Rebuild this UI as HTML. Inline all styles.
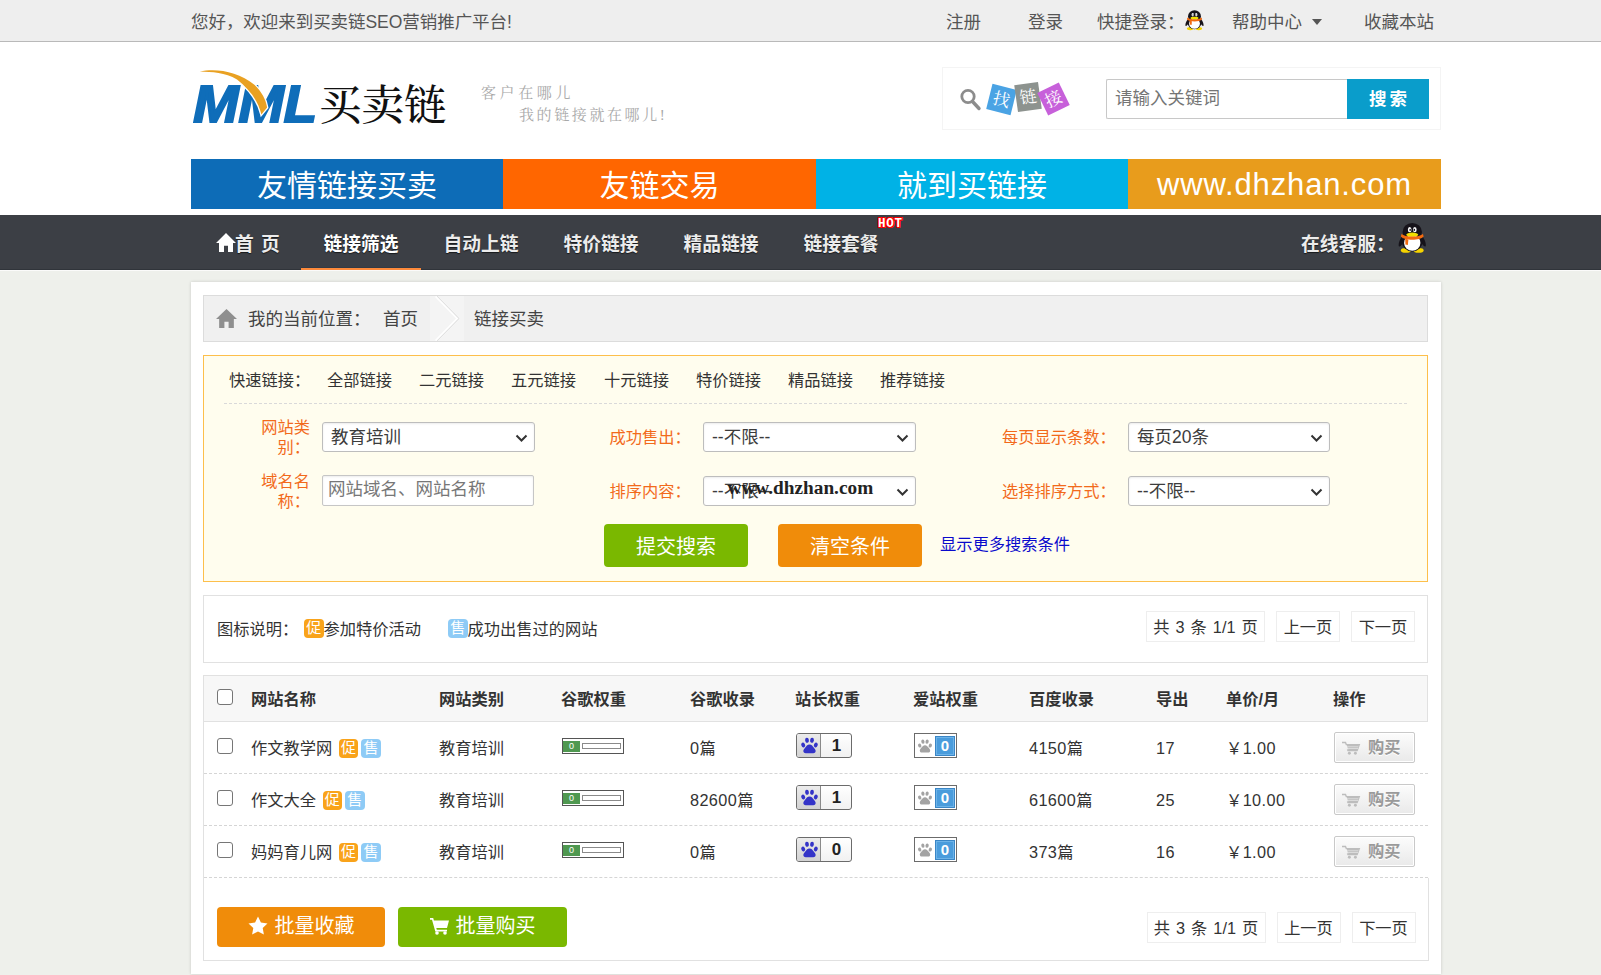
<!DOCTYPE html>
<html lang="zh-CN">
<head>
<meta charset="utf-8">
<title>链接买卖 - 买卖链SEO营销推广平台</title>
<style>
*{box-sizing:border-box;margin:0;padding:0}
html,body{width:1601px;height:975px;overflow:hidden}
body{background:#eef0eb;font-family:"Liberation Sans","Noto Sans CJK SC",sans-serif;color:#333;font-size:16.25px;position:relative}
a{color:inherit;text-decoration:none}
ul{list-style:none}
.abs{position:absolute}

/* top bar */
#topbar{position:absolute;left:0;top:0;width:1601px;height:42px;background:#eee;border-bottom:1px solid #b9b9b9;font-size:17.5px;color:#555;line-height:44px}
#topbar span,#topbar a{position:absolute;top:0;white-space:nowrap}
#topbar .caret{left:1312px;top:18.5px;width:0;height:0;border-left:5.5px solid transparent;border-right:5.5px solid transparent;border-top:6px solid #555}

/* header */
#header{position:absolute;left:0;top:42px;width:1601px;height:173px;background:#fff}
#logo{position:absolute;left:191px;top:24px}
.slogan{position:absolute;font-family:"Liberation Serif","Noto Serif CJK SC",serif;font-size:15px;color:#a9a9a9;white-space:nowrap;line-height:20px}
#sbox{position:absolute;left:942px;top:25px;width:499px;height:63px;border:1px solid #f4f4f4}
#sbox input{position:absolute;left:163px;top:11px;width:242px;height:40px;border:1px solid #c8c8c8;border-right:0;border-radius:2px 0 0 2px;padding:0 8px 2px 8px;font-size:17.5px;font-family:inherit;color:#333;outline:0;background:#fff}
#sbox input::placeholder{color:#757575;opacity:1}
#sbox button{position:absolute;left:404px;top:11px;width:82px;height:40px;border:0;background:#0a9dcb;color:#fff;font-weight:bold;font-size:17.5px;font-family:inherit;letter-spacing:0;padding:0 0 4px 0;word-spacing:-2px}
#banner{position:absolute;left:191px;top:117px;width:1250px;height:50px;display:flex;color:#fff;font-size:30px;line-height:54px;text-align:center}
#banner div{height:50px;white-space:nowrap;overflow:hidden}

/* nav */
#nav{position:absolute;left:0;top:215px;width:1601px;height:55px;background:#3c3f45;box-shadow:inset 0 -1px 0 #30343a,0 1px 0 #fbfbfa;color:#ececec;font-weight:bold;font-size:18.75px;line-height:59px;text-shadow:0 1px 1px rgba(0,0,0,.6)}
#nav a{position:absolute;top:0;height:55px;overflow:hidden;white-space:nowrap;text-align:center}
#nav a.on{border-bottom:2px solid #fd8a3b;color:#fff;box-shadow:inset 0 -1px 0 #333a44}
#nav .hot{position:absolute;left:878px;top:3px;font-size:12.5px;line-height:13px;font-family:"Liberation Mono",monospace;font-weight:bold;color:#fff;letter-spacing:0.7px;text-shadow:1px 0 0 #f00,-1px 0 0 #f00,0 1px 0 #f00,0 -1px 0 #f00,1px 1px 0 #f00,-1px -1px 0 #f00,1px -1px 0 #f00,-1px 1px 0 #f00}

/* main container */
#main{position:absolute;left:191px;top:282px;width:1250px;height:692px;background:#fff;box-shadow:0 0 3px rgba(0,0,0,.16)}
#crumb{position:absolute;left:12px;top:13px;width:1225px;height:47px;background:#f0f0f0;border:1px solid #dcdcdc;font-size:17.5px;color:#444;line-height:46px}
#crumb span{position:absolute;top:0;white-space:nowrap}

#filter{position:absolute;left:12px;top:73px;width:1225px;height:227px;background:#fffdee;border:1px solid #fdbf4b}
#quick{position:absolute;left:20px;top:0;width:1183px;height:48px;border-bottom:1px dashed #d9d9d9;font-size:16.25px;line-height:49px;color:#333}
#quick a,#quick span{position:absolute;top:0;white-space:nowrap}
.flabel{position:absolute;color:#f26a1b;font-size:16.25px;line-height:20px;text-align:right}
.sel{position:absolute;height:30px;border:1px solid #bdbdbd;border-radius:3px;background:#fff;box-shadow:inset 0 1px 2px rgba(0,0,0,.08)}
.sel select{appearance:none;-webkit-appearance:none;border:0;background:transparent;width:100%;height:100%;font-size:17.5px;font-family:inherit;color:#3c3c3c;padding:0 26px 0 8px;outline:0;line-height:28px}
.sel svg{position:absolute;right:6px;top:11px;pointer-events:none}
.tin{position:absolute;height:31px;border:1px solid #c6c6c6;border-radius:2px;background:#fff;font-size:17.5px;font-family:inherit;color:#333;padding:0 5px 2px 5px;outline:0;box-shadow:inset 0 1px 2px rgba(0,0,0,.08)}
.tin::placeholder{color:#777;opacity:1}
.btn{position:absolute;border:0;border-radius:4px;color:#fff;font-family:inherit;font-size:20px;text-align:center;white-space:nowrap}
.green{background:#7ab800}
.orange{background:#f08c0a}
.wm{position:absolute;font-family:"Liberation Serif",serif;font-weight:bold;font-size:19px;color:#222;white-space:nowrap;pointer-events:none}

#legend{position:absolute;left:12px;top:313px;width:1225px;height:68px;border:1px solid #e1e1e1;background:#fff;font-size:16.25px;line-height:66px}
#legend>span{position:absolute;top:0;white-space:nowrap}
.bd{display:inline-block;width:19.5px;height:18.5px;border-radius:4px;color:#fff;font-size:15px;line-height:17px;text-align:center;vertical-align:middle;position:relative;overflow:hidden}
.bd.c{background:#f9a31a}
.bd.s{background:#8ecbf6}
.pg{position:absolute;height:31px;border:1px solid #eee;background:#fff;font-size:16.25px;line-height:30px;text-align:center;color:#333;white-space:nowrap}

#tbl{position:absolute;left:12px;top:393px;width:1225px;height:286px;border-left:1px solid #e1e1e1}
#thead{position:absolute;left:-1px;top:0;width:1225px;height:47px;background:#f7f7f7;border:1px solid #e1e1e1;font-weight:bold;font-size:16.25px;line-height:47px;color:#333}
#thead span{position:absolute;top:0;white-space:nowrap}
.row{position:absolute;left:0;width:1224px;height:52px;border-bottom:1px dashed #d5d5d5;font-size:16.25px;line-height:52px;color:#333}
.row>span{position:absolute;top:0;white-space:nowrap}
.cb{position:absolute;width:16px;height:16px;border:1px solid #767676;border-radius:3px;background:#fff;appearance:none;-webkit-appearance:none;margin:0}
.pr{position:absolute;left:358px;top:16px;width:62px;height:16px;border:1px solid #555;background:#fff}
.pr i{position:absolute;left:0;top:1.5px;width:17px;height:11px;background:#4f9850;color:#fff;font-size:9px;line-height:11px;text-align:center;font-style:normal;font-weight:normal;font-family:"Liberation Sans",sans-serif}
.pr b{position:absolute;left:19px;top:4px;width:39px;height:6px;border:1px solid #8a8a8a;background:#fff}
.br{position:absolute;left:592px;top:11px;width:56px;height:25px;border:1px solid #6b6b6b;border-radius:3px;background:linear-gradient(#fff,#f1f1f1);overflow:hidden}
.br i{position:absolute;left:0;top:0;width:24px;height:23px;background:linear-gradient(#ececec,#d2d2d2);border-right:1px solid #8a8a8a}
.br b{position:absolute;left:25px;top:0;width:29px;height:23px;font-size:17px;line-height:23px;text-align:center;color:#222;font-weight:bold}
.br svg,.az svg{position:absolute}
.az{position:absolute;left:710px;top:11px;width:43px;height:25px;border:1px solid #6b6b6b;background:#fff}
.az b{position:absolute;left:20px;top:1.5px;width:20px;height:20px;background:#4a9cdc;border:1px solid #3a86c6;box-shadow:inset 0 0 0 1px #6db3e8;color:#fff;font-size:15px;line-height:18px;text-align:center;font-weight:bold;font-family:"Liberation Sans",sans-serif}
.buy{position:absolute;left:1130px;top:10px;width:81px;height:31px;border:1px solid #c9c9c9;border-radius:2px;background:linear-gradient(#fcfcfc,#e9e9e9);color:#9a9a9a;font-weight:bold;font-size:16.25px;line-height:28px;text-shadow:0 1px 0 #fff;box-shadow:inset 0 0 0 1px #fff}
.buy em{position:absolute;left:33px;top:0;font-style:normal;white-space:nowrap}
.buy svg{position:absolute;left:7px;top:7.5px}
#foot{position:absolute;left:-1px;top:203px;width:1226px;height:83px;border:1px solid #e1e1e1;border-top:0}
</style>
</head>
<body>

<div id="topbar">
  <span style="left:191px;letter-spacing:-0.05px">您好，欢迎来到买卖链SEO营销推广平台!</span>
  <a style="left:946px">注册</a>
  <a style="left:1028px">登录</a>
  <span style="left:1097px">快捷登录：</span>
  <svg class="abs" style="left:1184.500px;top:10px" width="19" height="20.500" viewBox="0 0 30 32"><g><path d="M4.500 14C1.500 18 .3 22 .8 24.500c.5 1.600 2.200.2 4.200-2.500zM25.500 14c3 4 4.200 8 3.700 10.500-.5 1.600-2.200.2-4.200-2.500z" fill="#16131a"/><ellipse cx="8.300" cy="29.200" rx="5.300" ry="2.500" fill="#f6d400"/><ellipse cx="21.700" cy="29.200" rx="5.300" ry="2.500" fill="#f6d400"/><ellipse cx="15" cy="19.500" rx="11" ry="10.800" fill="#16131a"/><ellipse cx="15" cy="9.800" rx="10.200" ry="9.600" fill="#16131a"/><ellipse cx="15" cy="21.300" rx="8.600" ry="8.300" fill="#fff"/><ellipse cx="12.300" cy="7.300" rx="1.900" ry="2.700" fill="#fff"/><ellipse cx="17.700" cy="7.300" rx="1.900" ry="2.700" fill="#fff"/><ellipse cx="12.800" cy="7.600" rx=".8" ry="1.200" fill="#16131a"/><ellipse cx="17.200" cy="7.600" rx=".8" ry="1.200" fill="#16131a"/><ellipse cx="15" cy="12.600" rx="6.300" ry="2.300" fill="#f3e000"/><path d="M3.800 11.600c3.500 4 19 4 22.400 0l.8 3c-4 4.600-20 4.600-24 0z" fill="#f26a10"/><path d="M7.600 16.800l3.300.9-.5 5.800-2.600-.6z" fill="#f26a10"/></g></svg>
  <a style="left:1232px">帮助中心</a>
  <i class="abs caret"></i>
  <a style="left:1364px">收藏本站</a>
</div>

<div id="header">
  <svg id="logo" width="260" height="64" viewBox="0 0 260 64">
    <text transform="scale(1.067 1)" x="2" y="56.2" font-family="Liberation Sans, sans-serif" font-weight="bold" font-style="italic" font-size="51" fill="#0f6db9" stroke="#0f6db9" stroke-width="2" stroke-linejoin="miter">MML</text>
    <path d="M8.800 5.600C24 2 47 5 63.400 18.700C71 26 75 34 76.100 41.500L70.400 48.400C67 34 58 23 46 13.500C34 6.500 21 6 8.800 5.600Z" fill="#e9a122" stroke="#fff" stroke-width="2.600" paint-order="stroke"/>
    <text x="128" y="53.500" font-family="Liberation Serif, Noto Serif CJK SC, serif" font-size="42.500" fill="#111" font-weight="500">买卖链</text>
  </svg>
  <div class="slogan" style="left:481px;top:41px;letter-spacing:3.6px">客户在哪儿</div>
  <div class="slogan" style="left:519px;top:62.5px;letter-spacing:2.6px">我的链接就在哪儿!</div>
  <div id="sbox">
    <svg class="abs" style="left:14px;top:17.500px" width="26" height="28" viewBox="0 0 26 28"><circle cx="11" cy="10.500" r="6.200" fill="none" stroke="#8c8c8c" stroke-width="2.800"/><path d="M15.500 15.500L22 22.500" stroke="#8c8c8c" stroke-width="3.400" stroke-linecap="round"/></svg>
    <svg class="abs" style="left:38px;top:10px" width="100" height="48" viewBox="0 0 100 48" font-family="Liberation Serif, Noto Serif CJK SC, serif" font-size="17" fill="#fff" text-anchor="middle">
      <g transform="translate(20.500 21.500) rotate(14)"><rect x="-12.500" y="-13" width="25" height="26" fill="#4aa3e4"/><text x="0" y="6">找</text></g>
      <g transform="translate(47 19) rotate(-8)"><rect x="-12" y="-13.500" width="24" height="27" fill="#8d938f"/><text x="0" y="6">链</text></g>
      <g transform="translate(72.500 21) rotate(-26)"><rect x="-12" y="-12.500" width="24" height="25" fill="#c760da"/><text x="0" y="6">接</text></g>
    </svg>
    <input type="text" placeholder="请输入关键词">
    <button>搜 索</button>
  </div>
  <div id="banner">
    <div style="width:312px;background:#0d6cb7">友情链接买卖</div>
    <div style="width:313px;background:#ff6600">友链交易</div>
    <div style="width:312px;background:#00b2e6">就到买链接</div>
    <div style="width:313px;background:#e89c1c;font-size:31px;letter-spacing:0.85px;line-height:51px">www.dhzhan.com</div>
  </div>
</div>

<div id="nav">
  <a style="left:191px;width:110px"><svg class="abs" style="left:25px;top:18px" width="20" height="19" viewBox="0 0 20 18" preserveAspectRatio="none"><path d="M10 0L0 9.500h3V18h5v-6h4v6h5V9.500h3z" fill="#fff"/></svg><span class="abs" style="left:44px;top:0;word-spacing:2px">首 页</span></a>
  <a class="on" style="left:301px;width:120px">链接筛选</a>
  <a style="left:421px;width:120px">自动上链</a>
  <a style="left:541px;width:120px">特价链接</a>
  <a style="left:661px;width:120px">精品链接</a>
  <a style="left:781px;width:120px">链接套餐</a>
  <span class="hot">HOT</span>
  <span class="abs" style="left:1301px;top:0;white-space:nowrap">在线客服：</span>
  <svg class="abs" style="left:1397.500px;top:7px" width="28.500" height="32" viewBox="0 0 30 32.200"><g><path d="M4.500 14C1.500 18 .3 22 .8 24.500c.5 1.600 2.200.2 4.200-2.500zM25.500 14c3 4 4.200 8 3.700 10.500-.5 1.600-2.200.2-4.200-2.500z" fill="#16131a"/><ellipse cx="8.300" cy="29.200" rx="5.300" ry="2.500" fill="#f6d400"/><ellipse cx="21.700" cy="29.200" rx="5.300" ry="2.500" fill="#f6d400"/><ellipse cx="15" cy="19.500" rx="11" ry="10.800" fill="#16131a"/><ellipse cx="15" cy="9.800" rx="10.200" ry="9.600" fill="#16131a"/><ellipse cx="15" cy="21.300" rx="8.600" ry="8.300" fill="#fff"/><ellipse cx="12.300" cy="7.300" rx="1.900" ry="2.700" fill="#fff"/><ellipse cx="17.700" cy="7.300" rx="1.900" ry="2.700" fill="#fff"/><ellipse cx="12.800" cy="7.600" rx=".8" ry="1.200" fill="#16131a"/><ellipse cx="17.200" cy="7.600" rx=".8" ry="1.200" fill="#16131a"/><ellipse cx="15" cy="12.600" rx="6.300" ry="2.300" fill="#f3e000"/><path d="M3.800 11.600c3.500 4 19 4 22.400 0l.8 3c-4 4.600-20 4.600-24 0z" fill="#f26a10"/><path d="M7.600 16.800l3.300.9-.5 5.800-2.600-.6z" fill="#f26a10"/></g></svg>
</div>

<div id="main">
  <div id="crumb">
    <svg class="abs" style="left:12px;top:13px" width="21" height="19" viewBox="0 0 20 18"><path d="M10 0L0 9.500h3V18h5v-6h4v6h5V9.500h3z" fill="#8f8f8f"/></svg>
    <span style="left:44px">我的当前位置：</span>
    <span style="left:179px">首页</span>
    <svg class="abs" style="left:226px;top:0" width="34" height="45" viewBox="0 0 34 44" preserveAspectRatio="none"><rect x="0" y="0" width="34" height="44" fill="#f4f4f4"/><path d="M6 0L28 22L6 44" fill="none" stroke="#fff" stroke-width="3"/><path d="M7 0L29 22L7 44" fill="none" stroke="#dedede" stroke-width="1"/></svg>
    <span style="left:270px">链接买卖</span>
  </div>

  <div id="filter">
    <div id="quick">
      <span style="left:5px">快速链接：</span>
      <a style="left:103px">全部链接</a>
      <a style="left:195px">二元链接</a>
      <a style="left:287px">五元链接</a>
      <a style="left:380px">十元链接</a>
      <a style="left:472px">特价链接</a>
      <a style="left:564px">精品链接</a>
      <a style="left:656px">推荐链接</a>
    </div>
    <div class="flabel" style="left:49px;top:61px;width:57px">网站类别：</div>
    <div class="sel" style="left:118px;top:66px;width:213px"><select><option>教育培训</option></select><svg width="13" height="8" viewBox="0 0 13 8"><path d="M1.500 1.500L6.500 6.500L11.500 1.500" fill="none" stroke="#333" stroke-width="2"/></svg></div>
    <div class="flabel" style="left:49px;top:115px;width:57px">域名名称：</div>
    <input class="tin" style="left:118px;top:119px;width:212px" placeholder="网站域名、网站名称">

    <div class="flabel" style="left:379px;top:71px;width:107.75px">成功售出：</div>
    <div class="sel" style="left:499px;top:66px;width:213px"><select><option>--不限--</option></select><svg width="13" height="8" viewBox="0 0 13 8"><path d="M1.500 1.500L6.500 6.500L11.500 1.500" fill="none" stroke="#333" stroke-width="2"/></svg></div>
    <div class="flabel" style="left:379px;top:125px;width:107.75px">排序内容：</div>
    <div class="sel" style="left:499px;top:120px;width:213px"><select><option>--不限--</option></select><svg width="13" height="8" viewBox="0 0 13 8"><path d="M1.500 1.500L6.500 6.500L11.500 1.500" fill="none" stroke="#333" stroke-width="2"/></svg></div>
    <div class="wm" style="left:523.5px;top:121px;font-size:19.3px">www.dhzhan.com</div>

    <div class="flabel" style="left:779px;top:71px;width:132.75px">每页显示条数：</div>
    <div class="sel" style="left:924px;top:66px;width:202px"><select><option>每页20条</option></select><svg width="13" height="8" viewBox="0 0 13 8"><path d="M1.500 1.500L6.500 6.500L11.500 1.500" fill="none" stroke="#333" stroke-width="2"/></svg></div>
    <div class="flabel" style="left:779px;top:125px;width:132.75px">选择排序方式：</div>
    <div class="sel" style="left:924px;top:120px;width:202px"><select><option>--不限--</option></select><svg width="13" height="8" viewBox="0 0 13 8"><path d="M1.500 1.500L6.500 6.500L11.500 1.500" fill="none" stroke="#333" stroke-width="2"/></svg></div>

    <button class="btn green" style="left:400px;top:168px;width:144px;height:43px">提交搜索</button>
    <button class="btn orange" style="left:574px;top:168px;width:144px;height:43px">清空条件</button>
    <a class="abs" style="left:736px;top:178px;color:#0a0acc;font-size:16.25px;line-height:20px;white-space:nowrap">显示更多搜索条件</a>
  </div>

  <div id="legend">
    <span style="left:13px">图标说明：</span>
    <span style="left:100px"><i class="bd c" style="font-style:normal;top:-2px">促</i>参加特价活动</span>
    <span style="left:244px"><i class="bd s" style="font-style:normal;top:-2px">售</i>成功出售过的网站</span>
    <div class="pg" style="left:942px;top:15px;width:119px;word-spacing:1.5px">共 3 条 1/1 页</div>
    <div class="pg" style="left:1072px;top:15px;width:64px">上一页</div>
    <div class="pg" style="left:1147px;top:15px;width:64px">下一页</div>
  </div>

  <div id="tbl">
    <div id="thead">
      <input type="checkbox" class="cb" style="left:13px;top:13px">
      <span style="left:47px">网站名称</span>
      <span style="left:235px">网站类别</span>
      <span style="left:357px">谷歌权重</span>
      <span style="left:486px">谷歌收录</span>
      <span style="left:591px">站长权重</span>
      <span style="left:709px">爱站权重</span>
      <span style="left:825px">百度收录</span>
      <span style="left:952px">导出</span>
      <span style="left:1022px">单价/月</span>
      <span style="left:1129px">操作</span>
    </div>
    <div class="row" style="top:47px">
      <input type="checkbox" class="cb" style="left:13px;top:16px">
      <span style="left:47px">作文教学网 <i class="bd c" style="font-style:normal;top:-1px;margin-left:2px">促</i><i class="bd s" style="font-style:normal;top:-1px;margin-left:3px">售</i></span>
      <span style="left:235px">教育培训</span>
      <div class="pr"><i>0</i><b></b></div>
      <span style="left:486px;letter-spacing:.4px">0篇</span>
      <div class="br"><i></i><svg style="left:3px;top:2px" width="19" height="19" viewBox="0 0 19 19" fill="#3434c8"><ellipse cx="3.2" cy="9" rx="1.900" ry="2.400" transform="rotate(-25 3.200 9)"/><ellipse cx="7" cy="4.300" rx="1.900" ry="2.600" transform="rotate(-8 7 4.300)"/><ellipse cx="12" cy="4.300" rx="1.900" ry="2.600" transform="rotate(8 12 4.300)"/><ellipse cx="15.800" cy="9" rx="1.900" ry="2.400" transform="rotate(25 15.800 9)"/><path d="M9.500 8.500c2.200 0 3.200 1.800 4.600 3.400 1.500 1.700 2 3 1.200 4.300-.9 1.400-2.700 1-5.800 1s-4.900.4-5.800-1c-.8-1.300-.3-2.600 1.200-4.300 1.400-1.600 2.400-3.400 4.600-3.400z"/></svg><b>1</b></div>
      <div class="az"><svg style="left:2px;top:4px" width="16" height="16" viewBox="0 0 19 19" fill="#a3a3a3"><ellipse cx="3.200" cy="9" rx="1.900" ry="2.400" transform="rotate(-25 3.200 9)"/><ellipse cx="7" cy="4.300" rx="1.900" ry="2.600" transform="rotate(-8 7 4.300)"/><ellipse cx="12" cy="4.300" rx="1.900" ry="2.600" transform="rotate(8 12 4.300)"/><ellipse cx="15.800" cy="9" rx="1.900" ry="2.400" transform="rotate(25 15.800 9)"/><path d="M9.500 8.500c2.200 0 3.200 1.800 4.600 3.400 1.500 1.700 2 3 1.200 4.300-.9 1.400-2.700 1-5.800 1s-4.900.4-5.800-1c-.8-1.300-.3-2.600 1.200-4.300 1.400-1.600 2.400-3.400 4.600-3.400z"/></svg><b>0</b></div>
      <span style="left:825px;letter-spacing:.4px">4150篇</span>
      <span style="left:952px;letter-spacing:.4px">17</span>
      <span style="left:1022px;letter-spacing:.4px">￥1.00</span>
      <a class="buy"><svg width="19" height="15" viewBox="0 0 22 17"><path d="M0 1.500h4l1 2.500H20l-2.500 7H7l-.7-1.500" fill="none" stroke="#bdbdbd" stroke-width="1.600"/><path d="M5.500 4.500H19.500L17.300 10.200H7.300z" fill="#bdbdbd"/><path d="M6 6.500h13M6.500 8.500h12" stroke="#e9e9e9" stroke-width=".8"/><circle cx="8.500" cy="14" r="1.700" fill="#bdbdbd"/><circle cx="15.500" cy="14" r="1.700" fill="#bdbdbd"/></svg><em>购买</em></a>
    </div>
    <div class="row" style="top:99px">
      <input type="checkbox" class="cb" style="left:13px;top:16px">
      <span style="left:47px">作文大全 <i class="bd c" style="font-style:normal;top:-1px;margin-left:2px">促</i><i class="bd s" style="font-style:normal;top:-1px;margin-left:3px">售</i></span>
      <span style="left:235px">教育培训</span>
      <div class="pr"><i>0</i><b></b></div>
      <span style="left:486px;letter-spacing:.4px">82600篇</span>
      <div class="br"><i></i><svg style="left:3px;top:2px" width="19" height="19" viewBox="0 0 19 19" fill="#3434c8"><ellipse cx="3.2" cy="9" rx="1.900" ry="2.400" transform="rotate(-25 3.200 9)"/><ellipse cx="7" cy="4.300" rx="1.900" ry="2.600" transform="rotate(-8 7 4.300)"/><ellipse cx="12" cy="4.300" rx="1.900" ry="2.600" transform="rotate(8 12 4.300)"/><ellipse cx="15.800" cy="9" rx="1.900" ry="2.400" transform="rotate(25 15.800 9)"/><path d="M9.500 8.500c2.200 0 3.200 1.800 4.600 3.400 1.500 1.700 2 3 1.200 4.300-.9 1.400-2.700 1-5.800 1s-4.900.4-5.800-1c-.8-1.300-.3-2.600 1.200-4.300 1.400-1.600 2.400-3.400 4.600-3.400z"/></svg><b>1</b></div>
      <div class="az"><svg style="left:2px;top:4px" width="16" height="16" viewBox="0 0 19 19" fill="#a3a3a3"><ellipse cx="3.200" cy="9" rx="1.900" ry="2.400" transform="rotate(-25 3.200 9)"/><ellipse cx="7" cy="4.300" rx="1.900" ry="2.600" transform="rotate(-8 7 4.300)"/><ellipse cx="12" cy="4.300" rx="1.900" ry="2.600" transform="rotate(8 12 4.300)"/><ellipse cx="15.800" cy="9" rx="1.900" ry="2.400" transform="rotate(25 15.800 9)"/><path d="M9.500 8.500c2.200 0 3.200 1.800 4.600 3.400 1.500 1.700 2 3 1.200 4.300-.9 1.400-2.700 1-5.800 1s-4.900.4-5.800-1c-.8-1.300-.3-2.600 1.200-4.300 1.400-1.600 2.400-3.400 4.600-3.400z"/></svg><b>0</b></div>
      <span style="left:825px;letter-spacing:.4px">61600篇</span>
      <span style="left:952px;letter-spacing:.4px">25</span>
      <span style="left:1022px;letter-spacing:.4px">￥10.00</span>
      <a class="buy"><svg width="19" height="15" viewBox="0 0 22 17"><path d="M0 1.500h4l1 2.500H20l-2.500 7H7l-.7-1.500" fill="none" stroke="#bdbdbd" stroke-width="1.600"/><path d="M5.500 4.500H19.500L17.300 10.200H7.300z" fill="#bdbdbd"/><path d="M6 6.500h13M6.500 8.500h12" stroke="#e9e9e9" stroke-width=".8"/><circle cx="8.500" cy="14" r="1.700" fill="#bdbdbd"/><circle cx="15.500" cy="14" r="1.700" fill="#bdbdbd"/></svg><em>购买</em></a>
    </div>
    <div class="row" style="top:151px">
      <input type="checkbox" class="cb" style="left:13px;top:16px">
      <span style="left:47px">妈妈育儿网 <i class="bd c" style="font-style:normal;top:-1px;margin-left:2px">促</i><i class="bd s" style="font-style:normal;top:-1px;margin-left:3px">售</i></span>
      <span style="left:235px">教育培训</span>
      <div class="pr"><i>0</i><b></b></div>
      <span style="left:486px;letter-spacing:.4px">0篇</span>
      <div class="br"><i></i><svg style="left:3px;top:2px" width="19" height="19" viewBox="0 0 19 19" fill="#3434c8"><ellipse cx="3.2" cy="9" rx="1.900" ry="2.400" transform="rotate(-25 3.200 9)"/><ellipse cx="7" cy="4.300" rx="1.900" ry="2.600" transform="rotate(-8 7 4.300)"/><ellipse cx="12" cy="4.300" rx="1.900" ry="2.600" transform="rotate(8 12 4.300)"/><ellipse cx="15.800" cy="9" rx="1.900" ry="2.400" transform="rotate(25 15.800 9)"/><path d="M9.500 8.500c2.200 0 3.200 1.800 4.600 3.400 1.500 1.700 2 3 1.200 4.300-.9 1.400-2.700 1-5.800 1s-4.900.4-5.800-1c-.8-1.300-.3-2.600 1.200-4.300 1.400-1.600 2.400-3.400 4.600-3.400z"/></svg><b>0</b></div>
      <div class="az"><svg style="left:2px;top:4px" width="16" height="16" viewBox="0 0 19 19" fill="#a3a3a3"><ellipse cx="3.200" cy="9" rx="1.900" ry="2.400" transform="rotate(-25 3.200 9)"/><ellipse cx="7" cy="4.300" rx="1.900" ry="2.600" transform="rotate(-8 7 4.300)"/><ellipse cx="12" cy="4.300" rx="1.900" ry="2.600" transform="rotate(8 12 4.300)"/><ellipse cx="15.800" cy="9" rx="1.900" ry="2.400" transform="rotate(25 15.800 9)"/><path d="M9.500 8.500c2.200 0 3.200 1.800 4.600 3.400 1.500 1.700 2 3 1.200 4.300-.9 1.400-2.700 1-5.800 1s-4.900.4-5.800-1c-.8-1.300-.3-2.600 1.200-4.300 1.400-1.600 2.400-3.400 4.600-3.400z"/></svg><b>0</b></div>
      <span style="left:825px;letter-spacing:.4px">373篇</span>
      <span style="left:952px;letter-spacing:.4px">16</span>
      <span style="left:1022px;letter-spacing:.4px">￥1.00</span>
      <a class="buy"><svg width="19" height="15" viewBox="0 0 22 17"><path d="M0 1.500h4l1 2.500H20l-2.500 7H7l-.7-1.500" fill="none" stroke="#bdbdbd" stroke-width="1.600"/><path d="M5.500 4.500H19.500L17.300 10.200H7.300z" fill="#bdbdbd"/><path d="M6 6.500h13M6.500 8.500h12" stroke="#e9e9e9" stroke-width=".8"/><circle cx="8.500" cy="14" r="1.700" fill="#bdbdbd"/><circle cx="15.500" cy="14" r="1.700" fill="#bdbdbd"/></svg><em>购买</em></a>
    </div>
    <div id="foot">
      <button class="btn orange" style="left:13px;top:29px;width:168px;height:40px;font-size:20px;padding-bottom:5px"><svg width="20" height="19" viewBox="0 0 20 19" style="vertical-align:-2px;margin-right:7px"><path d="M10 .5l2.900 6 6.600.9-4.800 4.600 1.200 6.500L10 15.400 4.100 18.500l1.200-6.500L.5 7.400l6.600-.9z" fill="#fff"/></svg>批量收藏</button>
      <button class="btn green" style="left:194px;top:29px;width:169px;height:40px;font-size:20px;padding-bottom:5px"><svg width="20" height="18" viewBox="0 0 20 18" style="vertical-align:-2px;margin-right:6px"><path d="M0 1h3.200l.7 2.500H19l-2 7.500H6.300l.5 1.800H17v1.700H5.300L2 2.700H0z" fill="#fff"/><circle cx="7" cy="16" r="1.800" fill="#fff"/><circle cx="15" cy="16" r="1.800" fill="#fff"/></svg>批量购买</button>
      <div class="pg" style="left:942.5px;top:34px;width:119px;word-spacing:1.5px">共 3 条 1/1 页</div>
      <div class="pg" style="left:1072.5px;top:34px;width:64px">上一页</div>
      <div class="pg" style="left:1147.5px;top:34px;width:64px">下一页</div>
    </div>
  </div>
</div>

</body>
</html>
